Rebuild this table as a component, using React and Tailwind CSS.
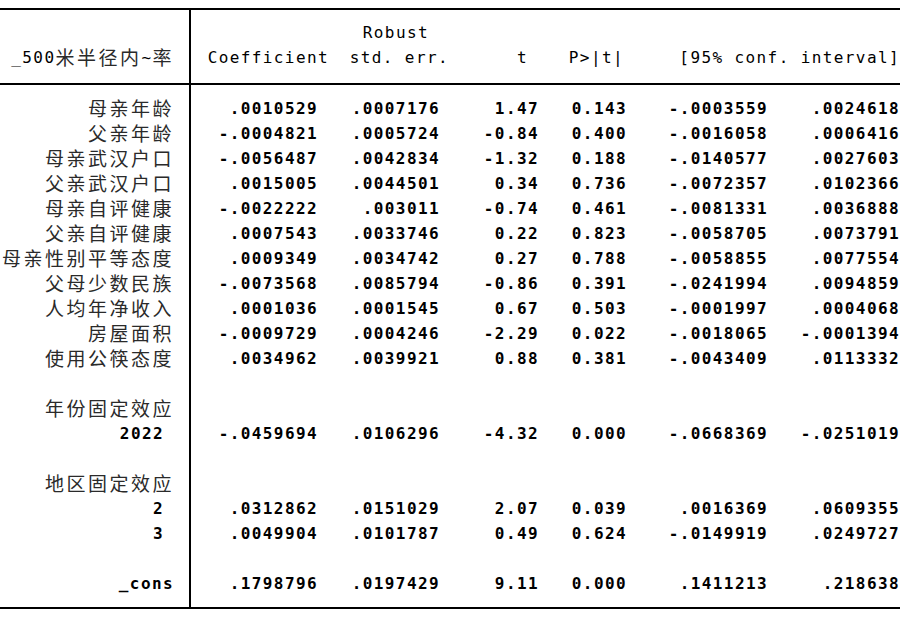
const mono = { fontFamily: '"DejaVu Sans Mono", "Liberation Mono", monospace' };
const cjk = { fontFamily: '"Noto Sans CJK SC", sans-serif' };

const rows = [
  { label: "母亲年龄", v: [".0010529", ".0007176", "1.47", "0.143", "-.0003559", ".0024618"] },
  { label: "父亲年龄", v: ["-.0004821", ".0005724", "-0.84", "0.400", "-.0016058", ".0006416"] },
  { label: "母亲武汉户口", v: ["-.0056487", ".0042834", "-1.32", "0.188", "-.0140577", ".0027603"] },
  { label: "父亲武汉户口", v: [".0015005", ".0044501", "0.34", "0.736", "-.0072357", ".0102366"] },
  { label: "母亲自评健康", v: ["-.0022222", ".003011", "-0.74", "0.461", "-.0081331", ".0036888"] },
  { label: "父亲自评健康", v: [".0007543", ".0033746", "0.22", "0.823", "-.0058705", ".0073791"] },
  { label: "母亲性别平等态度", v: [".0009349", ".0034742", "0.27", "0.788", "-.0058855", ".0077554"] },
  { label: "父母少数民族", v: ["-.0073568", ".0085794", "-0.86", "0.391", "-.0241994", ".0094859"] },
  { label: "人均年净收入", v: [".0001036", ".0001545", "0.67", "0.503", "-.0001997", ".0004068"] },
  { label: "房屋面积", v: ["-.0009729", ".0004246", "-2.29", "0.022", "-.0018065", "-.0001394"] },
  { label: "使用公筷态度", v: [".0034962", ".0039921", "0.88", "0.381", "-.0043409", ".0113332"] },
  {},
  { label: "年份固定效应" },
  { level: "2022", v: ["-.0459694", ".0106296", "-4.32", "0.000", "-.0668369", "-.0251019"] },
  {},
  { label: "地区固定效应" },
  { level: "2", v: [".0312862", ".0151029", "2.07", "0.039", ".0016369", ".0609355"] },
  { level: "3", v: [".0049904", ".0101787", "0.49", "0.624", "-.0149919", ".0249727"] },
  {},
  { level: "_cons", cons: true, v: [".1798796", ".0197429", "9.11", "0.000", ".1411213", ".218638"] },
];

const widths = ["w-[127px]", "w-[122px]", "w-[99px]", "w-[88px]", "w-[141px]", "w-[132px]"];

function Label({ row }) {
  if (row.label) {
    return (
      <span className="text-[19px] tracking-[2.5px] text-[#2a2a2a]" style={cjk}>
        {row.label}
      </span>
    );
  }
  if (row.level) {
    return (
      <span className={`text-[16px] font-bold tracking-[1.4px] ${row.cons ? "" : "pr-[10px]"}`} style={mono}>
        {row.level}
      </span>
    );
  }
  return null;
}

export default function App() {
  return (
    <div className="w-[912px] h-[627px] bg-white text-black pt-[8px]">
      <div className="w-[900px] border-t-2 border-b-2 border-black">
        <div className="flex border-b-2 border-black">
          <div className="w-[191px] border-r-2 border-black pt-[35px] pb-[13px] pr-[15px] flex justify-end items-center h-[73px]">
            <span className="text-[16px] tracking-[1.4px]" style={mono}>_500</span>
            <span className="text-[19px] tracking-[2.5px] text-[#2a2a2a]" style={cjk}>
              米半径内
            </span>
            <span className="text-[16px] tracking-[1.4px]" style={mono}>~</span>
            <span className="text-[19px] tracking-[2.5px] text-[#2a2a2a]" style={cjk}>
              率
            </span>
          </div>
          <div className="flex-1 pt-[10px] text-[16px] tracking-[1.4px]" style={mono}>
            <div className="flex h-[25px] items-center">
              <div className="w-[238px] text-right">Robust</div>
            </div>
            <div className="flex h-[25px] items-center">
              <div className="w-[138px] text-right">Coefficient</div>
              <div className="w-[120px] text-right">std. err.</div>
              <div className="w-[79px] text-right">t</div>
              <div className="w-[96px] text-right">P&gt;|t|</div>
              <div className="w-[276px] text-right">[95% conf. interval]</div>
            </div>
          </div>
        </div>
        <div className="flex">
          <div className="w-[191px] border-r-2 border-black pt-[11px] pb-[11px] pr-[15px]">
            {rows.map((row, i) => (
              <div key={i} className="h-[25px] flex items-center justify-end">
                <Label row={row} />
              </div>
            ))}
          </div>
          <div className="flex-1 pt-[11px] pb-[11px] text-[16px] font-bold tracking-[1.4px]" style={mono}>
            {rows.map((row, i) => (
              <div key={i} className="h-[25px] flex items-center">
                {row.v &&
                  row.v.map((val, j) => (
                    <div key={j} className={`${widths[j]} text-right`}>
                      {val}
                    </div>
                  ))}
              </div>
            ))}
          </div>
        </div>
      </div>
    </div>
  );
}
